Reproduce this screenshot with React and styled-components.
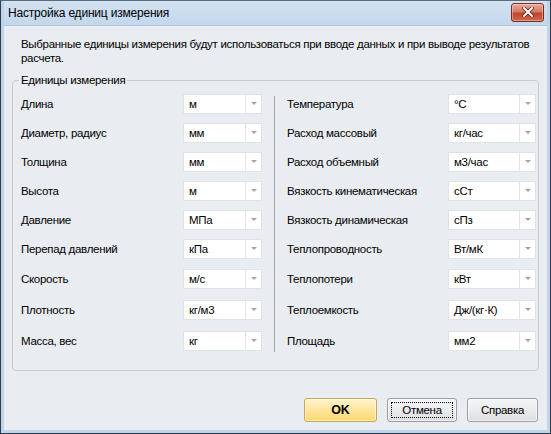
import React from 'react'
import styled, { createGlobalStyle } from 'styled-components'

const Global = createGlobalStyle`
  html, body { margin: 0; padding: 0; background: #ffffff; }
  body {
    font-family: "Liberation Sans", Arial, sans-serif;
    font-size: 11.5px;
    letter-spacing: -0.3px;
    color: #000;
  }
`

const Window = styled.div`
  width: 551px;
  height: 434px;
  box-sizing: border-box;
  display: flex;
  flex-direction: column;
  border: 1px solid #2e3a47;
  border-top-color: #5b6b7c;
  background: #bfd3ea;
  padding: 0 3px 3px 3px;
`

const TitleBar = styled.div`
  height: 24px;
  display: flex;
  align-items: center;
  justify-content: space-between;
  padding: 0 3px 0 4px;
  background: linear-gradient(#d3e2f3, #c3d6ec);
`

const Title = styled.span`
  font-size: 12px;
  letter-spacing: -0.2px;
`

const CloseBtn = styled.div`
  width: 31px;
  height: 17px;
  margin-top: -2px;
  border: 1px solid #7a2d20;
  border-radius: 3px;
  background: linear-gradient(#e9a999 0%, #d57a63 45%, #c2452b 55%, #d2684d 100%);
  display: flex;
  align-items: center;
  justify-content: center;
  box-shadow: inset 0 0 0 1px rgba(255,255,255,0.35);
`

const Client = styled.div`
  flex: 1;
  background: #e9edf1;
  display: flex;
  flex-direction: column;
  padding: 11px 8px 8px 8px;
  border-top: 1px solid #b6c8dc;
`

const Description = styled.p`
  margin: 0 0 0 9px;
  line-height: 14px;
`

const Group = styled.fieldset`
  margin: 8px 0 0 0;
  padding: 2px 3px 14px 8px;
  border: 1px solid #c5ccd3;
  border-radius: 4px;
  min-width: 0;
`

const Legend = styled.legend`
  padding: 0 2px;
  margin-left: -2px;
  line-height: 14px;
`

const Columns = styled.div`
  display: grid;
  grid-template-columns: 241px 1px 249px;
  column-gap: 12px;
`

const Column = styled.div`
  display: flex;
  flex-direction: column;
`

const Separator = styled.div`
  background: #a0a8b0;
  margin: 7px 0 4px 0;
`

const Row = styled.div`
  height: ${p => p.$h}px;
  display: flex;
  align-items: center;
  justify-content: space-between;
`

const Combo = styled.div`
  width: ${p => p.$w}px;
  height: 20px;
  box-sizing: border-box;
  display: flex;
  background: #fff;
  border: 1px solid #dfe3e7;
`

const ComboText = styled.span`
  flex: 1;
  padding-left: 5px;
  line-height: 19px;
`

const ComboArrow = styled.span`
  width: 15px;
  border-left: 1px solid #e3e6e9;
  display: flex;
  align-items: center;
  justify-content: center;
  &::after {
    content: '';
    border-left: 3px solid transparent;
    border-right: 3px solid transparent;
    border-top: 3px solid #a2a6aa;
  }
`

const ButtonRow = styled.div`
  margin-top: auto;
  display: flex;
  justify-content: flex-end;
  gap: 10px;
  padding-right: 1px;
`

const Button = styled.button`
  width: ${p => p.$w}px;
  height: 24px;
  font-family: "Liberation Sans", Arial, sans-serif;
  font-size: ${p => (p.$primary ? '12.5px' : '11.5px')};
  letter-spacing: ${p => (p.$primary ? '0' : '-0.3px')};
  font-weight: ${p => (p.$primary ? 700 : 400)};
  color: #000;
  border-radius: 3px;
  border: 1px solid ${p => (p.$primary ? '#c9a74d' : '#9b9fa3')};
  background: ${p =>
    p.$primary
      ? 'linear-gradient(#fff5cf 0%, #ffe59a 50%, #fcd873 100%)'
      : 'linear-gradient(#f4f5f6 0%, #ebecee 50%, #dcdee1 100%)'};
  box-shadow: inset 0 0 0 1px rgba(255,255,255,0.6);
  padding: 0;
  position: relative;
  ${p =>
    p.$focused &&
    `&::after {
      content: '';
      position: absolute;
      inset: 3px;
      border: 1px dotted #000;
    }`}
`

// the form spaces its last three rows a little wider than the rest
const leftRows = [
  ['Длина', 'м', 29],
  ['Диаметр, радиус', 'мм', 29],
  ['Толщина', 'мм', 29],
  ['Высота', 'м', 29],
  ['Давление', 'МПа', 29],
  ['Перепад давлений', 'кПа', 29],
  ['Скорость', 'м/с', 31],
  ['Плотность', 'кг/м3', 31],
  ['Масса, вес', 'кг', 31],
]

const rightRows = [
  ['Температура', '°C', 29],
  ['Расход массовый', 'кг/час', 29],
  ['Расход объемный', 'м3/час', 29],
  ['Вязкость кинематическая', 'сСт', 29],
  ['Вязкость динамическая', 'сПз', 29],
  ['Теплопроводность', 'Вт/мК', 29],
  ['Теплопотери', 'кВт', 31],
  ['Теплоемкость', 'Дж/(кг·К)', 31],
  ['Площадь', 'мм2', 31],
]

const UnitRow = ({ label, value, width, height }) => (
  <Row $h={height}>
    <span>{label}</span>
    <Combo $w={width}>
      <ComboText>{value}</ComboText>
      <ComboArrow />
    </Combo>
  </Row>
)

export default function App() {
  return (
    <>
      <Global />
      <Window>
        <TitleBar>
          <Title>Настройка единиц измерения</Title>
          <CloseBtn>
            <svg width="12" height="10" viewBox="0 0 12 10">
              <path d="M2 1 L10 9 M10 1 L2 9" stroke="#5a2318" strokeWidth="3.6" strokeLinecap="square" />
              <path d="M2 1 L10 9 M10 1 L2 9" stroke="#fff" strokeWidth="2" strokeLinecap="square" />
            </svg>
          </CloseBtn>
        </TitleBar>
        <Client>
          <Description>
            Выбранные единицы измерения будут использоваться при вводе данных и при выводе результатов расчета.
          </Description>
          <Group>
            <Legend>Единицы измерения</Legend>
            <Columns>
              <Column>
                {leftRows.map(([l, v, h]) => (
                  <UnitRow key={l} label={l} value={v} width={79} height={h} />
                ))}
              </Column>
              <Separator />
              <Column>
                {rightRows.map(([l, v, h]) => (
                  <UnitRow key={l} label={l} value={v} width={88} height={h} />
                ))}
              </Column>
            </Columns>
          </Group>
          <ButtonRow>
            <Button $primary $w={73}>OK</Button>
            <Button $focused $w={70}>Отмена</Button>
            <Button $w={71}>Справка</Button>
          </ButtonRow>
        </Client>
      </Window>
    </>
  )
}
